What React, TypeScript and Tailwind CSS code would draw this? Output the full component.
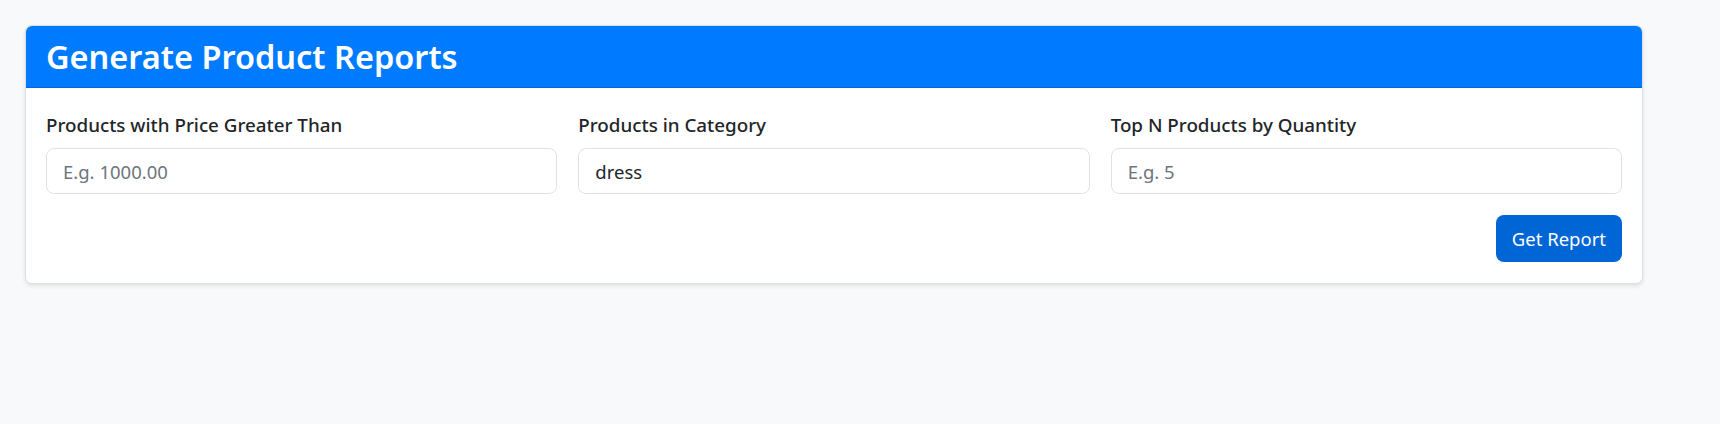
import React from "react";

const fields = [
  { label: "Products with Price Greater Than", placeholder: "E.g. 1000.00", value: "" },
  { label: "Products in Category", placeholder: "E.g. electronics", value: "dress" },
  { label: "Top N Products by Quantity", placeholder: "E.g. 5", value: "" },
];

export default function App() {
  return (
    <div className="min-h-[424px] bg-[#f8f9fa] pt-[25px] pl-[25px] font-['Noto_Sans',sans-serif] text-[#212529]">
      <div className="w-[1618px] overflow-hidden rounded-[7px] border border-[#dcdfe3] bg-white shadow-[0_2px_4px_rgba(0,0,0,0.1)]">
        <div className="border-b border-[#0069d9] bg-[#007bff] px-[20px] pt-[10px] pb-[9px]">
          <h2 className="m-0 text-[32.5px] leading-[42px] font-semibold text-white">Generate Product Reports</h2>
        </div>
        <div className="px-[20px] pt-[22px] pb-[21px]">
          <div className="grid grid-cols-3 gap-[21px]">
            {fields.map((f) => (
              <div key={f.label}>
                <label className="mb-[8px] block text-[18.8px] leading-[30px] font-medium">{f.label}</label>
                <input
                  type="text"
                  defaultValue={f.value}
                  placeholder={f.placeholder}
                  className="block h-[46px] w-full rounded-[8px] border border-[#dee2e6] bg-white px-[16px] text-[18.5px] text-[#212529] outline-none placeholder:text-[#6c757d]"
                />
              </div>
            ))}
          </div>
          <div className="mt-[21px] flex justify-end">
            <button className="h-[47px] rounded-[8px] bg-[#0066d6] px-[16px] text-[18.5px] text-white">Get Report</button>
          </div>
        </div>
      </div>
    </div>
  );
}
